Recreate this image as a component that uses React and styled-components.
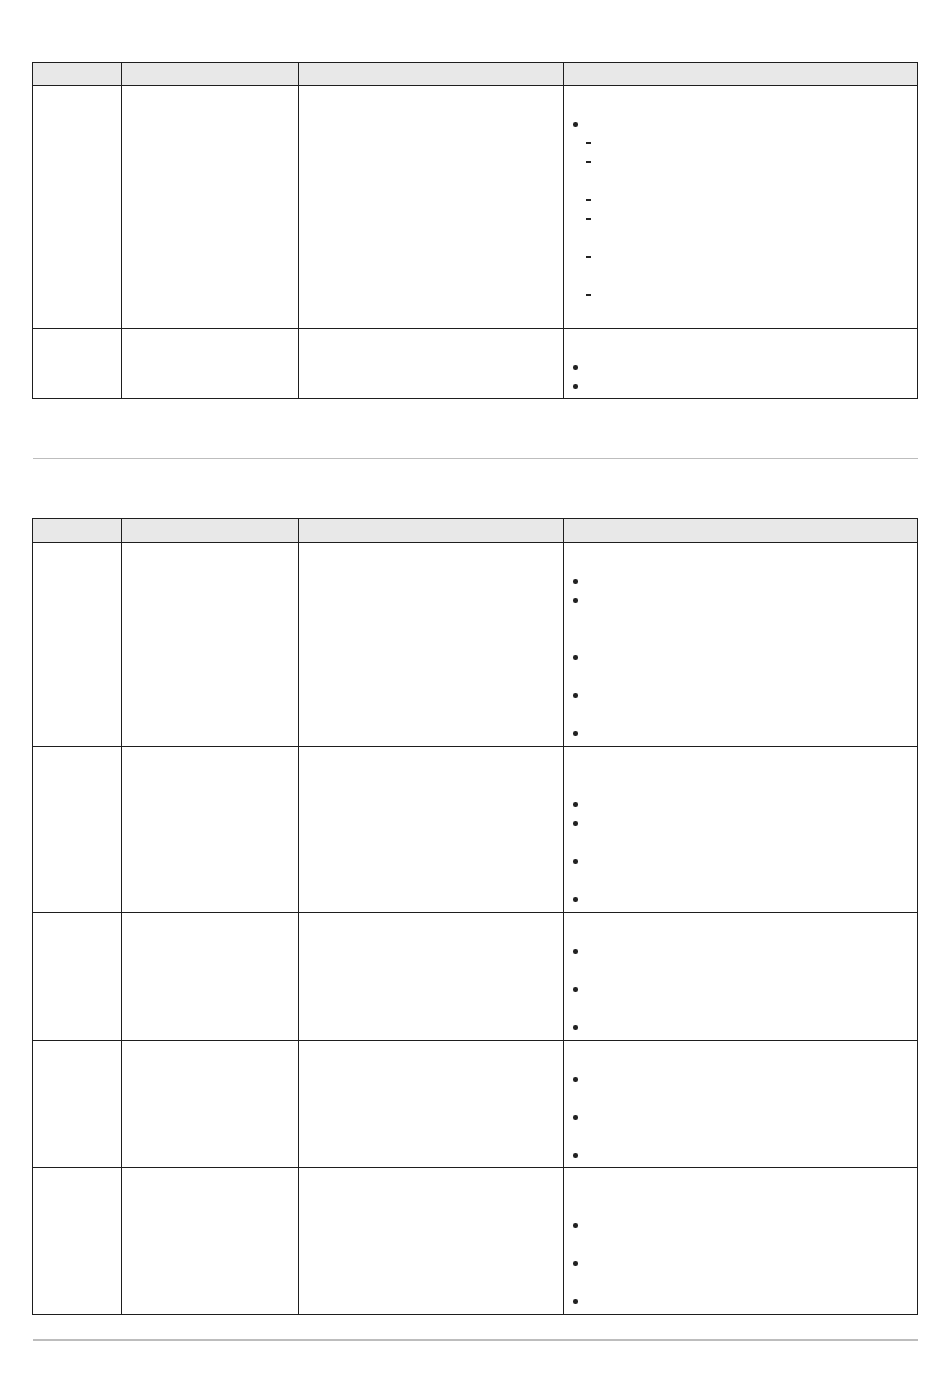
import React from "react";
import styled, { createGlobalStyle } from "styled-components";

const GlobalStyle = createGlobalStyle`
    body {
        margin: 0;
        background: #ffffff;
        font-family: "Liberation Sans", Arial, sans-serif;
        font-size: 13px;
        color: #222;
    }
`

// Layout

const Page = styled.div`
    width: 886px;
    padding: 62px 32px 40px;
`

const Table = styled.div`
    border-top: 1px solid #1e1e1e;
    border-left: 1px solid #1e1e1e;
`

const Row = styled.div`
    display: grid;
    grid-template-columns: 89px 177px 265px 354px;
    height: ${p => p.$height}px;
    background: ${p => (p.$head ? "#e8e8e8" : "#ffffff")};
`

const Cell = styled.div`
    border-right: 1px solid #1e1e1e;
    border-bottom: 1px solid #1e1e1e;
    padding: 9px 0 0;
    line-height: 19px;
`

const Divider = styled.hr`
    border: none;
    margin: ${p => p.$margin};
    height: ${p => p.$thick}px;
    background: #bdbdbd;
`

// Contenido de la celda

const Line = styled.div`
    height: ${p => p.$lines * 19}px;
`

const Item = styled.div`
    position: relative;
    height: ${p => p.$lines * 19}px;

    &::before {
        content: "";
        position: absolute;
        top: ${p => (p.$dash ? "9px" : "8px")};
        left: ${p => (p.$dash ? "22px" : "9px")};
        width: ${p => (p.$dash ? "5px" : "4.5px")};
        height: ${p => (p.$dash ? "2px" : "4.5px")};
        border-radius: ${p => (p.$dash ? "0" : "50%")};
        background: #222;
    }
`

const Nested = styled.div``

function Notes({ intro, items, dashes }) {
    return (
        <>
            <Line $lines={intro} />
            {items.map((n, i) => (
                <Item key={i} $lines={n} />
            ))}
            {dashes && (
                <Nested>
                    {dashes.map((n, i) => (
                        <Item key={i} $dash $lines={n} />
                    ))}
                </Nested>
            )}
        </>
    )
}

function DataTable({ head, rows }) {
    return (
        <Table>
            <Row $head $height={head}>
                <Cell />
                <Cell />
                <Cell />
                <Cell />
            </Row>
            {rows.map((r, i) => (
                <Row key={i} $height={r.height}>
                    <Cell />
                    <Cell />
                    <Cell />
                    <Cell>
                        <Notes intro={r.intro} items={r.items} dashes={r.dashes} />
                    </Cell>
                </Row>
            ))}
        </Table>
    )
}

const firstRows = [
    { height: 243, intro: 1, items: [1], dashes: [1, 2, 1, 2, 2, 1] },
    { height: 70, intro: 1, items: [1, 1] },
]

const secondRows = [
    { height: 204, intro: 1, items: [1, 3, 2, 2, 1] },
    { height: 166, intro: 2, items: [1, 2, 2, 1] },
    { height: 128, intro: 1, items: [2, 2, 1] },
    { height: 127, intro: 1, items: [2, 2, 1] },
    { height: 147, intro: 2, items: [2, 2, 1] },
]

export default function App() {
    return (
        <Page>
            <GlobalStyle />
            <DataTable head={23} rows={firstRows} />
            <Divider $thick={1} $margin="59px 0 59px 1px" />
            <DataTable head={24} rows={secondRows} />
            <Divider $thick={2} $margin="24px 0 0 1px" />
        </Page>
    )
}
